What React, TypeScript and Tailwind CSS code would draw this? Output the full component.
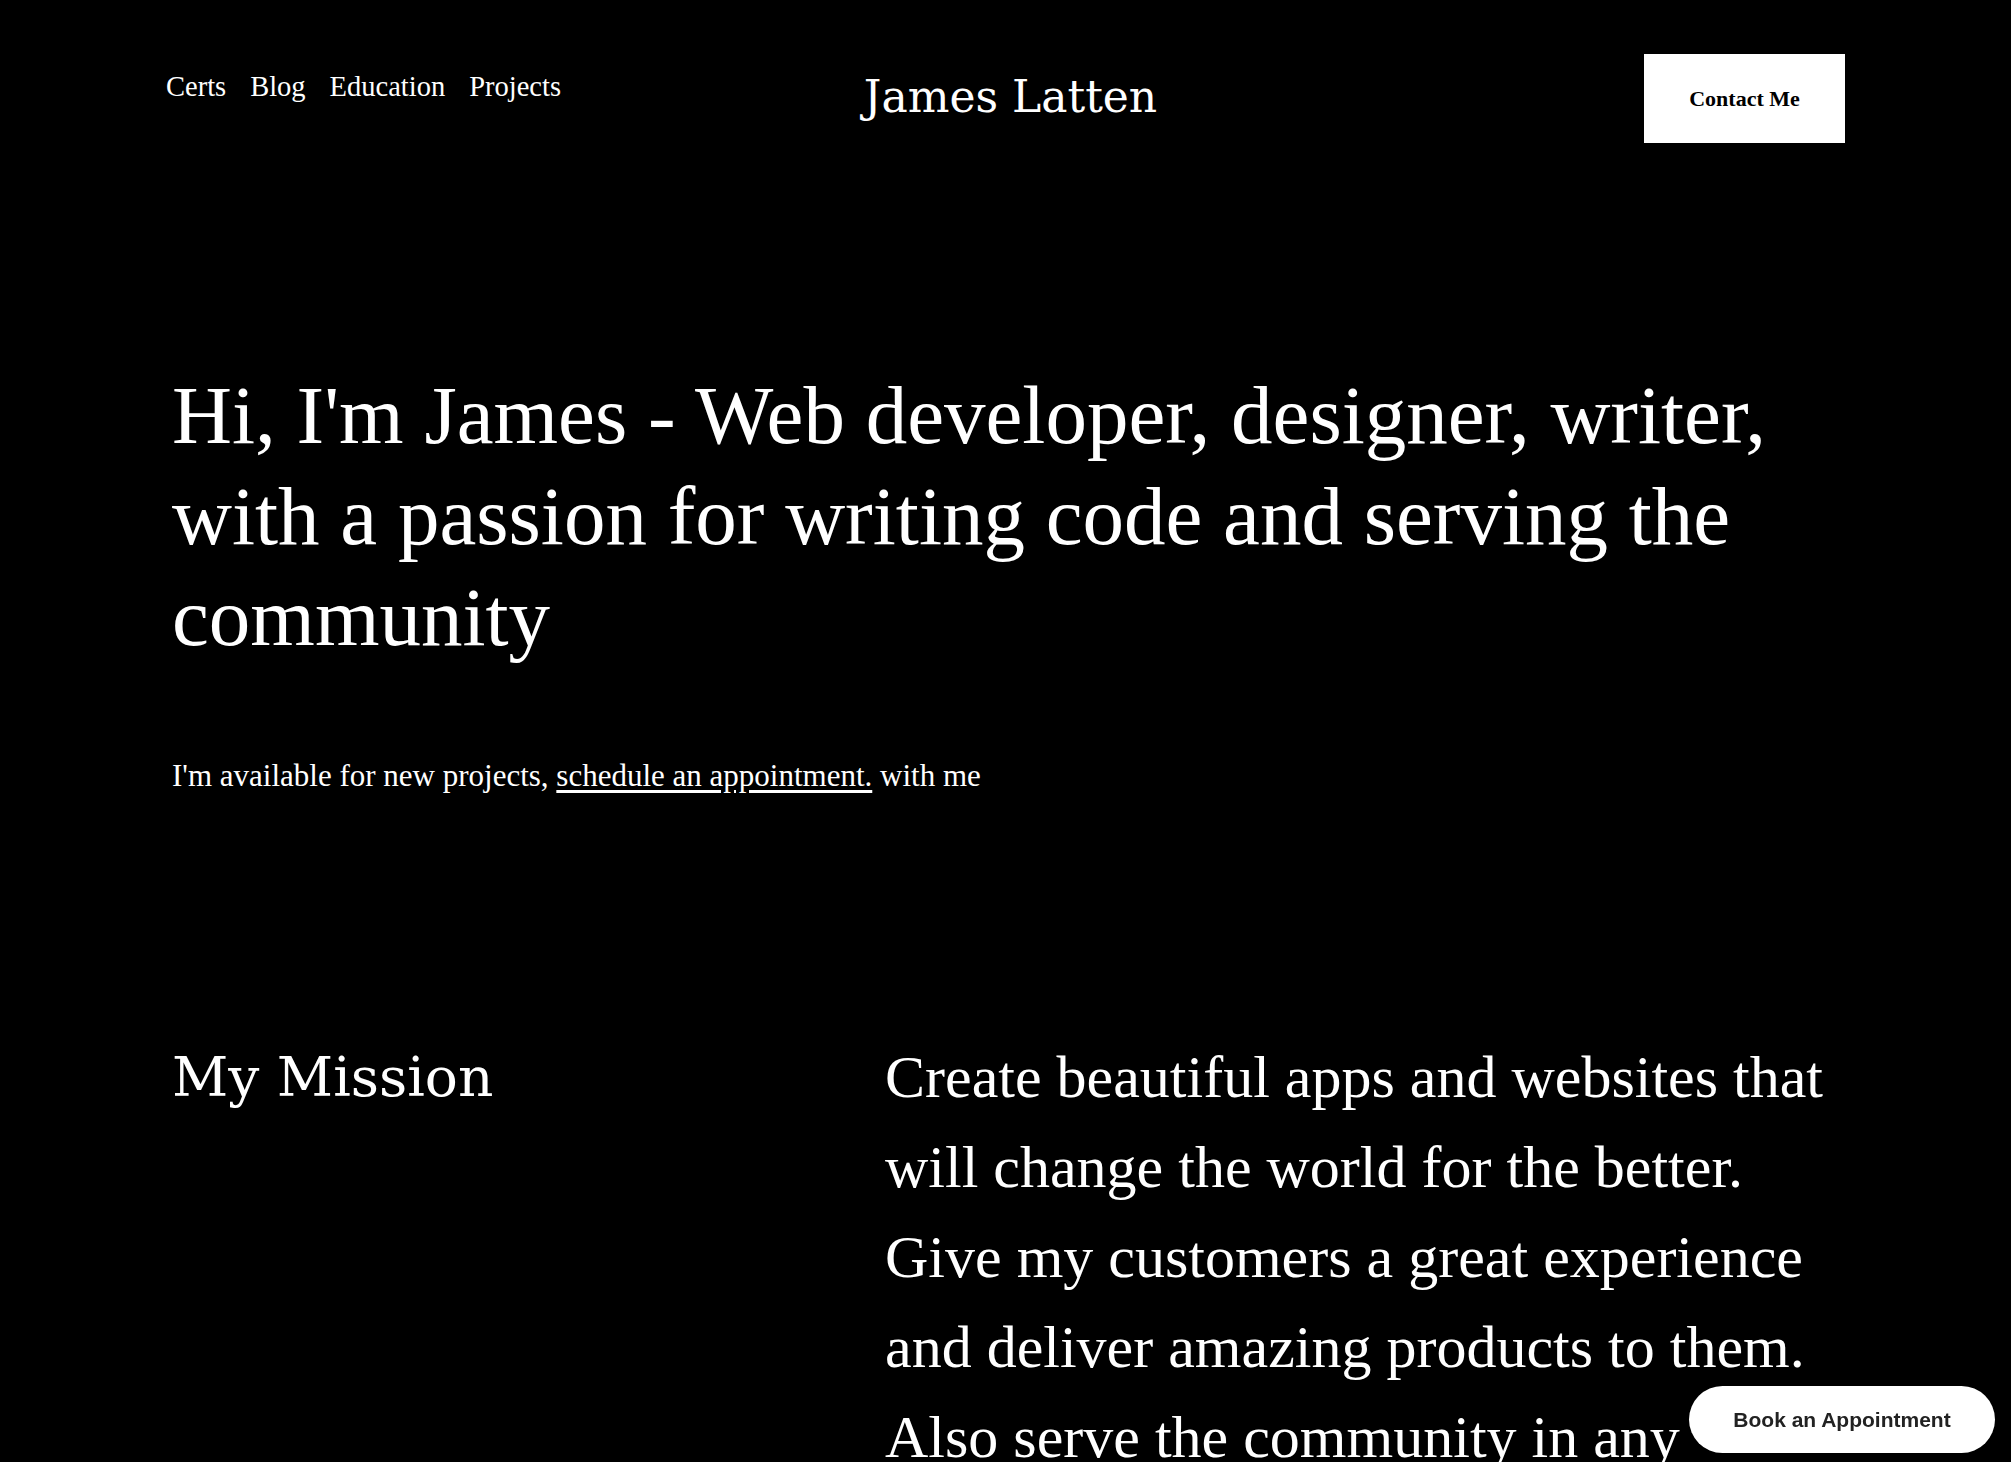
import React from 'react';

const navLinks = ['Certs', 'Blog', 'Education', 'Projects'];

const serif = { fontFamily: '"Liberation Serif", "Times New Roman", serif' };
const dejavu = { fontFamily: '"DejaVu Serif", Georgia, serif' };

export default function App() {
  return (
    <div className="min-h-screen bg-black text-white" style={serif}>
      <header className="grid grid-cols-3 items-start px-[166px] pt-[54px]">
        <nav className="flex gap-6 pt-[17px] text-[28.5px] leading-[32px]">
          {navLinks.map((link) => (
            <a key={link} href="#" className="hover:underline">
              {link}
            </a>
          ))}
        </nav>
        <a href="#" className="ml-[10px] justify-self-center pt-[17px] text-[44px] leading-[51px]" style={dejavu}>
          James Latten
        </a>
        <a
          href="#"
          className="flex h-[89px] w-[201px] items-center justify-center justify-self-end bg-white text-[22px] font-bold text-black"
        >
          Contact Me
        </a>
      </header>

      <section className="px-[172px] pt-[222px]">
        <h1 className="text-[83px] leading-[101px]">
          Hi, I'm James - Web developer, designer, writer, with a passion for writing code and serving the community
        </h1>
        <p className="mt-[85px] text-[31px]">
          I'm available for new projects,{' '}
          <a href="#" className="underline underline-offset-4">
            schedule an appointment.
          </a>{' '}
          with me
        </p>
      </section>

      <section className="flex px-[172px] pt-[232px] pb-24">
        <h2 className="mt-[12px] w-[713px] shrink-0 text-[55px] leading-[66px]" style={dejavu}>
          My Mission
        </h2>
        <p className="max-w-[960px] flex-1 text-[60px] leading-[90px]">
          Create beautiful apps and websites that will change the world for the better. Give my customers a great
          experience and deliver amazing products to them. Also serve the community in any capacity I can.
        </p>
      </section>

      <button
        className="fixed right-4 bottom-[9px] h-[67px] w-[306px] rounded-full bg-white text-[21px] font-bold text-[#222] shadow-md"
        style={{ fontFamily: '"Liberation Sans", Arial, sans-serif' }}
      >
        Book an Appointment
      </button>
    </div>
  );
}
